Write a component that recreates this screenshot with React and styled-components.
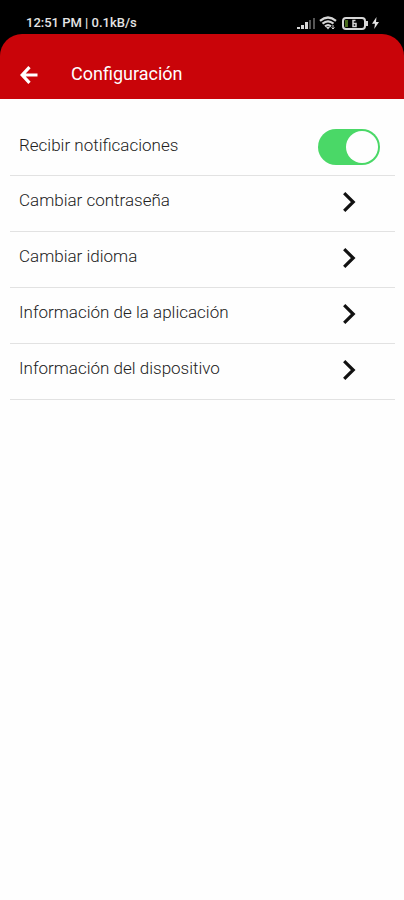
import React, { useState } from "react";
import styled, { createGlobalStyle } from "styled-components";

const GlobalStyle = createGlobalStyle`
  *, *::before, *::after { box-sizing: border-box; }
  body {
    margin: 0;
    background: #fefefe;
    font-family: Roboto, "Liberation Sans", sans-serif;
  }
`;

const Screen = styled.div`
  display: flex;
  flex-direction: column;
  min-height: 100vh;
`;

const Top = styled.div`
  background: #000;
`;

const StatusBar = styled.div`
  display: flex;
  align-items: center;
  justify-content: space-between;
  padding: 12px 25px 0 26px;
  height: 34px;
`;

const StatusText = styled.span`
  color: #e4e4e4;
  font-size: 13px;
  line-height: 20px;
  font-weight: 500;
`;

const StatusIcons = styled.div`
  display: flex;
  align-items: center;
  gap: 4px;

  svg { display: block; }
`;

const AppBar = styled.header`
  display: flex;
  align-items: center;
  gap: 32px;
  height: 65px;
  padding: 14px 19px 0;
  border-radius: 22px 22px 0 0;
  background: #c90409;
  color: #fff;
`;

const BackButton = styled.button`
  display: flex;
  padding: 2px 0 0;
  border: 0;
  background: none;
  color: inherit;
  cursor: pointer;
`;

const Title = styled.h1`
  margin: 0;
  font-size: 18px;
  line-height: 24px;
  font-weight: 400;
`;

const List = styled.main`
  display: flex;
  flex-direction: column;
  padding: 21px 9px 0 10px;
`;

const rowLayout = `
  display: flex;
  align-items: center;
  justify-content: space-between;
  width: 100%;
  height: 56px;
  border: 0;
  border-bottom: 1px solid #e2e2e2;
  cursor: pointer;
`;

const SwitchRow = styled.label`
  ${rowLayout}
  padding: 0 15px 2px 9px;
`;

const LinkRow = styled.button`
  ${rowLayout}
  padding: 0 39px 4px 9px;
  background: none;
  font-family: inherit;
  text-align: left;
`;

const Label = styled.span`
  padding-bottom: 4px;
  color: #222;
  font-size: 17px;
  line-height: 24px;
  font-weight: 300;
`;

const Switch = styled.input`
  appearance: none;
  display: flex;
  align-items: center;
  width: 62px;
  height: 36px;
  margin: 0;
  padding: 2px;
  border-radius: 18px;
  background: #c8c8c8;
  cursor: pointer;

  &::before {
    content: "";
    width: 32px;
    height: 32px;
    border-radius: 50%;
    background: #fefefe;
  }

  &:checked {
    justify-content: flex-end;
    background: #4ad867;
  }
`;

function SignalIcon() {
  return (
    <svg width="19" height="13" viewBox="0 0 19 13" aria-hidden="true">
      <g fill="#d6d6d6">
        <rect x="1" y="10" width="3" height="2" />
        <rect x="5" y="8" width="3" height="4" />
        <rect x="9" y="5" width="3" height="7" />
      </g>
      <g fill="#555">
        <rect x="13" y="3" width="2" height="9" />
        <rect x="17" y="1" width="2" height="11" />
      </g>
    </svg>
  );
}

function WifiIcon() {
  return (
    <svg width="18" height="14" viewBox="0 0 18 14" fill="none" stroke="#d6d6d6" strokeWidth="2.2" aria-hidden="true">
      <path d="M1 4.8Q9-1.8 17 4.8" />
      <path d="M3.5 7.7Q9 3 14.5 7.7" />
      <path d="M6 10.3Q9 7.8 12 10.3" />
      <path d="M7 11h4L9 13.5z" fill="#d6d6d6" stroke="none" />
      <path d="M14 9v4M12.5 11.5 14 13l1.5-1.5" strokeWidth="1" />
    </svg>
  );
}

function BatteryIcon() {
  return (
    <svg width="27" height="13" viewBox="0 0 27 13" aria-hidden="true">
      <rect x="2" y="1" width="22" height="11" rx="3" fill="none" stroke="#d6d6d6" strokeWidth="2" />
      <rect x="4" y="3" width="3" height="7" fill="#496b1d" />
      <path d="M25 4h2v5h-2z" fill="#d6d6d6" />
      <path d="M14.5 3.5h-2.5v6h3v-3h-3" fill="none" stroke="#d6d6d6" strokeWidth="1.5" />
    </svg>
  );
}

function BoltIcon() {
  return (
    <svg width="7" height="12" viewBox="0 0 7 12" aria-hidden="true">
      <path d="M4.5 0 0 6.8h3L2.2 12 7 5H4z" fill="#e4e4e4" />
    </svg>
  );
}

function BackIcon() {
  return (
    <svg width="20" height="20" viewBox="0 0 20 20" fill="none" stroke="currentColor" strokeWidth="3.2" aria-hidden="true">
      <path d="M10.5 2.2 3.2 10l7.3 7.8M3.2 10H18.5" />
    </svg>
  );
}

function ChevronIcon() {
  return (
    <svg width="14" height="22" viewBox="0 0 14 22" fill="none" stroke="#111" strokeWidth="3.2" aria-hidden="true">
      <path d="M2.2 2.2l9 8.8-9 8.8" />
    </svg>
  );
}

const links = [
  "Cambiar contraseña",
  "Cambiar idioma",
  "Información de la aplicación",
  "Información del dispositivo",
];

export default function App() {
  const [notifications, setNotifications] = useState(true);

  return (
    <Screen>
      <GlobalStyle />
      <Top>
        <StatusBar>
          <StatusText>12:51 PM | 0.1kB/s</StatusText>
          <StatusIcons>
            <SignalIcon />
            <WifiIcon />
            <BatteryIcon />
            <BoltIcon />
          </StatusIcons>
        </StatusBar>
        <AppBar>
          <BackButton type="button" aria-label="Volver">
            <BackIcon />
          </BackButton>
          <Title>Configuración</Title>
        </AppBar>
      </Top>
      <List>
        <SwitchRow>
          <Label>Recibir notificaciones</Label>
          <Switch
            type="checkbox"
            role="switch"
            checked={notifications}
            onChange={(event) => setNotifications(event.target.checked)}
          />
        </SwitchRow>
        {links.map((text) => (
          <LinkRow type="button" key={text}>
            <Label>{text}</Label>
            <ChevronIcon />
          </LinkRow>
        ))}
      </List>
    </Screen>
  );
}
